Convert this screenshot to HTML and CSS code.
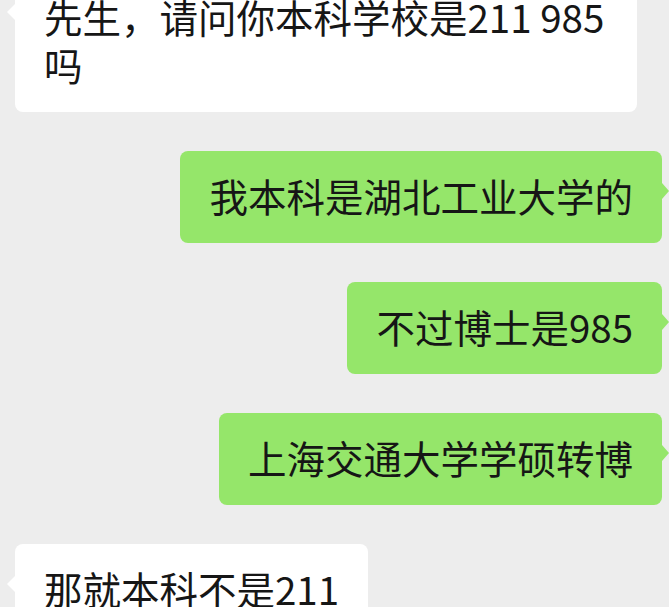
FILE: index.html
```html
<!DOCTYPE html>
<html lang="zh-CN">
<head>
  <meta charset="UTF-8">
  <meta name="viewport" content="width=device-width, initial-scale=1.0">
  <title>聊天</title>
  <link rel="stylesheet" href="styles.css">
</head>
<body>
  <div class="chat">
    <div class="msg msg-in">
      <div class="bubble bubble-in">先生，请问你本科学校是211 985吗</div>
    </div>
    <div class="msg msg-out">
      <div class="bubble bubble-out">我本科是湖北工业大学的</div>
    </div>
    <div class="msg msg-out">
      <div class="bubble bubble-out">不过博士是985</div>
    </div>
    <div class="msg msg-out">
      <div class="bubble bubble-out">上海交通大学学硕转博</div>
    </div>
    <div class="msg msg-in">
      <div class="bubble bubble-in">那就本科不是211</div>
    </div>
  </div>
</body>
</html>
```

FILE: styles.css
```css
body {
  margin: 0;
  height: 607px;
  overflow: hidden;
  background-color: #ededed;
  font-family: "Noto Sans CJK SC", "Noto Sans", sans-serif;
}

/* list is scrolled a little, so the first bubble is cut at the top */
.chat {
  display: flex;
  flex-direction: column;
  gap: 39px;
  margin-top: -28px;
  padding: 0 7px 0 15px;
}

.msg {
  display: flex;
}

.msg-out {
  justify-content: flex-end;
}

.bubble {
  position: relative;
  box-sizing: border-box;
  max-width: 622px;
  padding: 20px 29px 24px;
  border-radius: 8px;
  font-size: 38.5px;
  line-height: 48px;
  color: #161616;
}

.bubble-in {
  background-color: #ffffff;
}

.bubble-out {
  background-color: #95e66a;
}

/* little pointer on the side of each bubble */
.bubble::after {
  content: "";
  position: absolute;
  top: 32px;
  border-top: 8px solid transparent;
  border-bottom: 8px solid transparent;
}

.bubble-in::after {
  left: -8px;
  border-right: 8px solid #ffffff;
}

.bubble-out::after {
  right: -7px;
  border-left: 7px solid #95e66a;
}
```
